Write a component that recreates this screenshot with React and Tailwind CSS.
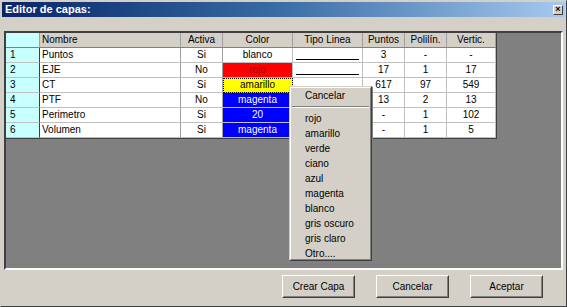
import React from 'react';

const cols = [34, 141, 42, 70, 70, 42, 42, 49];
const heads = ['', 'Nombre', 'Activa', 'Color', 'Tipo Linea', 'Puntos', 'Polilín.', 'Vertic.'];

const rows = [
  { n: '1', name: 'Puntos', act: 'Si', color: 'blanco', cc: 'bg-white text-black', line: true, p: '3', pl: '-', v: '-' },
  { n: '2', name: 'EJE', act: 'No', color: 'rojo', cc: 'bg-[#ff0000] text-[#8a0000]', line: true, p: '17', pl: '1', v: '17' },
  { n: '3', name: 'CT', act: 'Si', color: 'amarillo', cc: 'bg-[#ffff00] text-black', focus: true, p: '617', pl: '97', v: '549' },
  { n: '4', name: 'PTF', act: 'No', color: 'magenta', cc: 'bg-[#0000ff] text-white', p: '13', pl: '2', v: '13' },
  { n: '5', name: 'Perimetro', act: 'Si', color: '20', cc: 'bg-[#0000ff] text-white', p: '-', pl: '1', v: '102' },
  { n: '6', name: 'Volumen', act: 'Si', color: 'magenta', cc: 'bg-[#0000ff] text-white', p: '-', pl: '1', v: '5' },
];

const menuItems = ['rojo', 'amarillo', 'verde', 'ciano', 'azul', 'magenta', 'blanco', 'gris oscuro', 'gris claro', 'Otro....'];

const Cell = ({ w, className = '', children }) => (
  <div
    style={{ width: w }}
    className={`h-[15px] shrink-0 flex items-center border-r border-b border-[#c0c0c0] leading-none overflow-hidden ${className}`}
  >
    {children}
  </div>
);

const WinButton = ({ children }) => (
  <button className="w-[73px] h-[23px] bg-[#d4d0c8] border border-t-white border-l-white border-r-[#404040] border-b-[#404040] text-black">
    <span className="flex h-full w-full items-center justify-center border border-t-transparent border-l-transparent border-r-[#808080] border-b-[#808080]">
      {children}
    </span>
  </button>
);

export default function App() {
  return (
    <div className="relative w-[567px] h-[307px] bg-[#d4d0c8] border border-t-[#d4d0c8] border-l-[#d4d0c8] border-r-[#404040] border-b-[#404040] p-[1px] flex flex-col font-['Liberation_Sans',Arial,sans-serif] text-[10px] text-black select-none overflow-hidden">
      {/* title bar */}
      <div className="h-[15px] flex items-center justify-between pl-[3px] pr-[2px] bg-gradient-to-r from-[#0a246a] via-[#3a6ea5] to-[#a6caf0]">
        <span className="font-bold text-white text-[11px]">Editor de capas:</span>
        <span className="w-[10px] h-[10px] bg-[#d4d0c8] border border-t-white border-l-white border-r-[#404040] border-b-[#404040] flex items-center justify-center text-[9px] leading-none font-bold">×</span>
      </div>

      {/* grid area */}
      <div className="mt-[14px] ml-[2px] w-[559px] h-[239px] bg-[#808080] border-2 border-t-[#404040] border-l-[#404040] border-r-white border-b-white">
        <div className="inline-flex flex-col border-r border-b border-[#404040] bg-white">
          <div className="flex">
            {heads.map((h, i) => (
              <Cell
                key={i}
                w={cols[i]}
                className={`${i === 0 ? 'bg-[#c8ffff] border-r-[#404040]' : 'bg-[#d4d0c8]'} ${i === 1 ? 'justify-start pl-[2px]' : 'justify-center'} border-b-[#808080] border-r-[#a0a0a0]`}
              >
                {h}
              </Cell>
            ))}
          </div>
          {rows.map((r) => (
            <div key={r.n} className="flex">
              <Cell w={cols[0]} className="bg-[#c8ffff] pl-[4px] border-r-[#404040]">{r.n}</Cell>
              <Cell w={cols[1]} className="pl-[2px] border-r-[#a0a0a0]">{r.name}</Cell>
              <Cell w={cols[2]} className="justify-center border-r-[#a0a0a0]">{r.act}</Cell>
              <Cell w={cols[3]} className={`justify-center ${r.cc} ${r.focus ? 'outline-1 outline-dotted outline-black -outline-offset-1' : ''}`}>{r.color}</Cell>
              <Cell w={cols[4]} className="items-end pb-[2px] px-[3px]">
                {r.line && <div className="w-full h-[1px] bg-black" />}
              </Cell>
              <Cell w={cols[5]} className="justify-center">{r.p}</Cell>
              <Cell w={cols[6]} className="justify-center">{r.pl}</Cell>
              <Cell w={cols[7]} className="justify-center">{r.v}</Cell>
            </div>
          ))}
        </div>
      </div>

      {/* buttons */}
      <div className="mt-[5px] flex justify-end gap-[21px] pr-[22px]">
        <WinButton>Crear Capa</WinButton>
        <WinButton>Cancelar</WinButton>
        <WinButton>Aceptar</WinButton>
      </div>

      {/* context menu */}
      <div className="absolute left-[288px] top-[85px] w-[83px] h-[175px] bg-[#d4d0c8] border border-t-[#d4d0c8] border-l-[#d4d0c8] border-r-[#404040] border-b-[#404040] shadow-[1px_1px_0_#808080]">
        <div className="h-full border border-t-white border-l-white border-r-[#808080] border-b-[#808080]">
          <div className="h-[15px] flex items-center pl-[14px]">Cancelar</div>
          <div className="h-[8px] flex items-center px-[1px]">
            <div className="w-full border-t border-t-[#808080] border-b border-b-white" />
          </div>
          {menuItems.map((m) => (
            <div key={m} className="h-[15px] flex items-center pl-[14px]">{m}</div>
          ))}
        </div>
      </div>
    </div>
  );
}
